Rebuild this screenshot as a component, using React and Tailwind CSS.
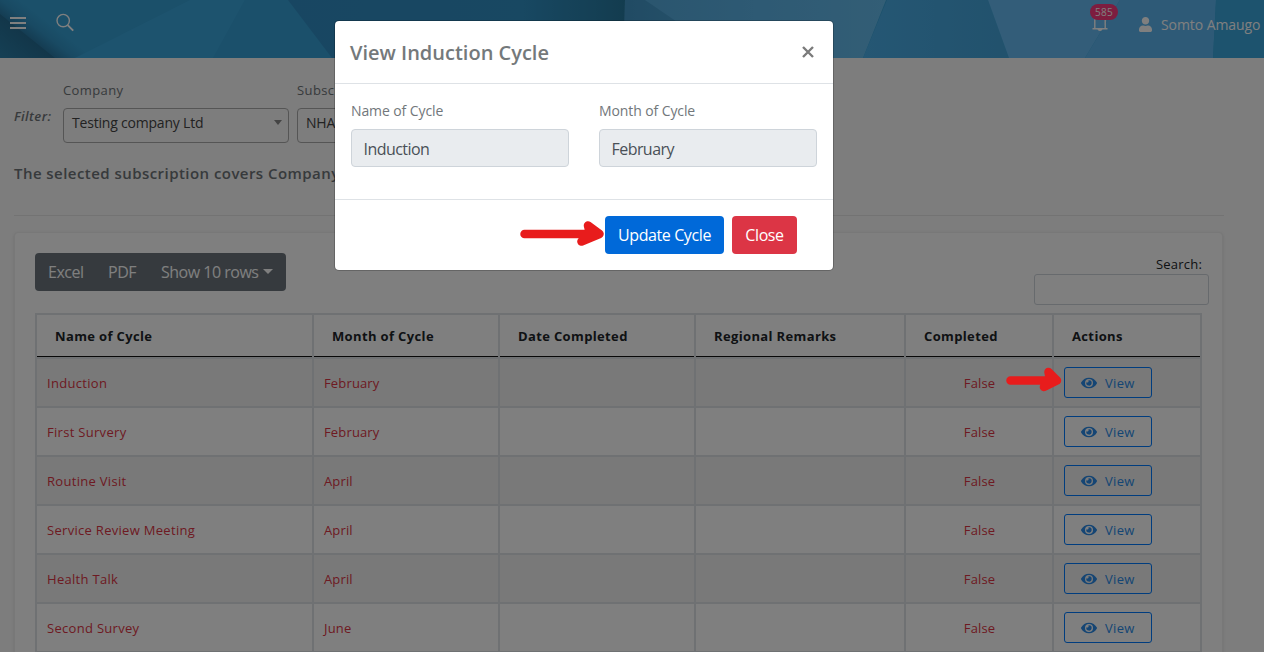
import { FaEye, FaUser } from "react-icons/fa";

const cycles = [
  ["Induction", "February"],
  ["First Survery", "February"],
  ["Routine Visit", "April"],
  ["Service Review Meeting", "April"],
  ["Health Talk", "April"],
  ["Second Survey", "June"],
];

const columns = ["Name of Cycle", "Month of Cycle", "Date Completed", "Regional Remarks", "Completed", "Actions"];

function HeaderArt() {
  return (
    <svg className="absolute inset-0 h-[58px] w-[1264px]" viewBox="0 0 1264 58" preserveAspectRatio="none">
      <defs>
        <linearGradient id="fold" gradientUnits="userSpaceOnUse" x1="6" y1="62" x2="31" y2="31">
          <stop offset="0" stopColor="#2b80aa" /><stop offset="1" stopColor="#24698f" />
        </linearGradient>
        <linearGradient id="shade" gradientUnits="userSpaceOnUse" x1="28" y1="36" x2="42" y2="18">
          <stop offset="0" stopColor="#2a7aa6" /><stop offset="0.5" stopColor="#3294c6" /><stop offset="1" stopColor="#36a0d4" />
        </linearGradient>
        <linearGradient id="mid" x1="0" x2="1"><stop offset="0" stopColor="#308dc4" /><stop offset="0.7" stopColor="#3090c4" /><stop offset="1" stopColor="#27799f" /></linearGradient>
        <linearGradient id="right" x1="0" x2="1"><stop offset="0" stopColor="#54aadc" /><stop offset="0.5" stopColor="#5cb4e8" /><stop offset="1" stopColor="#66bcec" /></linearGradient>
        <linearGradient id="wedge" x1="0" x2="1"><stop offset="0" stopColor="#4296c8" /><stop offset="1" stopColor="#50a8d8" /></linearGradient>
        <linearGradient id="deep" x1="0" x2="1"><stop offset="0" stopColor="#4aaee8" /><stop offset="1" stopColor="#44a4da" /></linearGradient>
      </defs>
      <rect width="1264" height="58" fill="#36a2d8" />
      <path d="M0 0H215L75 58H0Z" fill="url(#shade)" />
      <path d="M0 14L55 58H0Z" fill="url(#fold)" />
      <path d="M75 58L190 0H245L214 58Z" fill="#3ba6dc" />
      <path d="M245 0H290L333 58H213Z" fill="#36a0d6" />
      <path d="M288 0H625V58H332Z" fill="url(#mid)" />
      <path d="M625 0H886L863 58H624Z" fill="url(#right)" />
      <path d="M625 0H645L730 58H624Z" fill="url(#wedge)" />
      <path d="M887 0H988L1009 58H863Z" fill="url(#deep)" />
      <path d="M988 0H1120L1085 58H1009Z" fill="#66bbf2" />
      <path d="M1120 0H1216L1213 58H1085Z" fill="#5cb5ee" />
      <path d="M1216 0H1264V58H1213Z" fill="#3aa6dc" />
    </svg>
  );
}

function TopBar() {
  return (
    <header className="relative h-[58px]">
      <HeaderArt />
      <div className="relative flex h-[58px] justify-between text-white">
        <div className="flex pl-[10px]">
          <svg className="mt-[16px] h-[14px] w-4" viewBox="0 0 16 14"><path d="M0 2H16M0 7H16M0 12H16" stroke="currentColor" strokeWidth="2" /></svg>
          <svg className="mt-[13px] ml-[30px] h-[19px] w-[19px]" viewBox="0 0 19 19" fill="none" stroke="currentColor"><circle cx="7.2" cy="7.6" r="6.2" strokeWidth="1.4" /><path d="M11.7 12.1L17.2 17.6" strokeWidth="2" /></svg>
        </div>
        <div className="flex pr-1">
          <div className="relative w-[28px]">
            <svg className="absolute top-[14px] left-[2px] h-[18px] w-4" viewBox="0 0 16 18" fill="none" stroke="currentColor" strokeWidth="1.4"><path d="M0.5 14.8H15.5M2.8 14.5V6a5.2 5.2 0 0 1 10.4 0V14.5M6 15q2 2.6 4 0" /></svg>
            <span className="absolute top-1 left-0 h-4 w-[28px] rounded-full bg-[#fb3a7e] text-center text-[10px] leading-[17px] tracking-[0.2px] text-white">585</span>
          </div>
          <FaUser className="mt-[17px] ml-[21px] h-[15px] w-[13px]" preserveAspectRatio="none" />
          <span className="mt-[15px] ml-[9px] w-[99px] text-[14px] leading-5 tracking-[-0.08px] whitespace-nowrap">Somto Amaugo</span>
        </div>
      </div>
    </header>
  );
}

function Select({ label, value, width }) {
  return (
    <div className={width}>
      <div className="h-5 text-[13px] leading-5 tracking-[0.4px] text-[#6f7479]">{label}</div>
      <div className="mt-[8px] flex h-[35px] items-start justify-between rounded border border-[#aaa] bg-white/30 pt-[4px] pr-[6px] pl-2 text-[#444]">
        <span className="text-[14px] leading-5 tracking-[-0.2px] whitespace-nowrap">{value}</span>
        <svg className="mt-[7px] h-[5px] w-[8px]" viewBox="0 0 8 5"><path d="M0 0H8L4 5Z" fill="#888" /></svg>
      </div>
    </div>
  );
}

function CycleTable() {
  const grid = "grid grid-cols-[277px_186px_196px_210px_148px_148px]";
  return (
    <div className="w-[1167px] border-t-2 border-l-2 border-[#dee2e6]">
      <div className={grid}>
        {columns.map((c) => (
          <div key={c} className="h-[44px] border-r-2 border-b-2 border-[#dee2e6]">
            <div className="h-[42px] border-b border-[#111] pl-[18px] text-[13px] leading-[42px] font-bold tracking-[0.36px] whitespace-nowrap text-[#212529]">{c}</div>
          </div>
        ))}
      </div>
      {cycles.map(([name, month], i) => (
        <div key={name} className={`${grid} h-[49px] ${i % 2 ? "" : "bg-[#f2f2f2]"} text-[13px] leading-[49px] tracking-[0.3px] text-[#dc3545] *:h-[49px] *:border-r-2 *:border-b-2 *:border-[#dee2e6]`}>
          <div className="pl-[10px]">{name}</div>
          <div className="pl-[10px] tracking-[0.15px]">{month}</div>
          <div />
          <div />
          <div className="pl-[1px] text-center tracking-[0.15px]">False</div>
          <div className="pt-[8px] pl-[10px]">
            <button className="flex h-[31px] w-[88px] items-center rounded-[3px] border border-[#007bff] pl-4 leading-5 text-[#2a8be8]">
              <FaEye className="h-4 w-4" />
              <span className="ml-2">View</span>
            </button>
          </div>
        </div>
      ))}
    </div>
  );
}

function Arrow({ className, width, d }) {
  return (
    <svg className={className} viewBox={`0 0 ${width} 26`} fill="#e81c1c" stroke="#e81c1c" strokeLinecap="round" strokeLinejoin="round">
      <path d={d} strokeWidth="8.5" />
    </svg>
  );
}

function Field({ label, value }) {
  return (
    <div className="w-[218px]">
      <div className="text-[14px] leading-5 tracking-[-0.1px] text-[#72777b]">{label}</div>
      <div className="mt-[8px] h-[38px] rounded border border-[#ced4da] bg-[#e9ecef] pl-[11.5px] text-[16px] leading-[39px] tracking-[-0.55px] text-[#495057]">{value}</div>
    </div>
  );
}

function Modal() {
  return (
    <section className="absolute top-[20px] left-[334px] h-[251px] w-[500px] rounded-[5px] border border-black/20 bg-white bg-clip-padding">
      <div className="flex h-[63px] justify-between border-b border-[#dee2e6] pr-[19px] pl-[15px]">
        <h5 className="mt-[17px] text-[20px] leading-[30px] font-semibold text-[#74797b]">View Induction Cycle</h5>
        <svg className="mt-[25px] h-[12px] w-[12px]" viewBox="0 0 12 12"><path d="M1 1L11 11M11 1L1 11" stroke="#7b7b7b" strokeWidth="2.4" /></svg>
      </div>
      <div className="flex h-[116px] gap-[30px] border-b border-[#dee2e6] px-4 pt-[17px]">
        <Field label="Name of Cycle" value="Induction" />
        <Field label="Month of Cycle" value="February" />
      </div>
      <div className="flex justify-end gap-2 pt-4 pr-9 text-[16px] leading-[39px] text-white">
        <button className="h-[38px] w-[119px] rounded bg-[#0069d9] tracking-[-0.4px]">Update Cycle</button>
        <button className="h-[38px] w-[65px] rounded bg-[#dc3545] tracking-[-0.4px]">Close</button>
      </div>
    </section>
  );
}

export default function App() {
  return (
    <div className="relative h-[652px] w-[1264px] overflow-hidden bg-[#fafafa] font-['Open_Sans','Noto_Sans',sans-serif]">
      <TopBar />
      <main className="pl-[14px]">
        <div className="flex pt-[22px]">
          <div className="w-[49px] pt-[26px] text-[13px] leading-5 font-semibold tracking-[0.45px] text-[#6f7479] italic">Filter:</div>
          <Select label="Company" value="Testing company Ltd" width="w-[226px]" />
          <div className="w-2" />
          <Select label="Subscription" value="NHA" width="w-[226px]" />
        </div>
        <h6 className="mt-[19px] h-[25px] text-[15px] leading-[22px] font-semibold tracking-[0.45px] text-[#6f7479]">The selected subscription covers Company</h6>
        <div className="mt-[28px] w-[1210px] border-t border-[#e6e6e6]" />
        <div className="mt-[16px] h-[440px] w-[1209px] rounded border border-[#f0f0f0] bg-white px-[20px] pt-[20px] shadow-sm">
          <div className="flex justify-between">
            <div className="flex h-[38px] w-[251px] rounded bg-[#6c757d] pl-[13px] text-[16px] leading-[39px] tracking-[-0.5px] whitespace-nowrap text-white">
              <span className="w-[60px]">Excel</span>
              <span className="w-[53px]">PDF</span>
              <span className="w-[102px]">Show 10 rows</span>
              <svg className="mt-[16px] h-[5px] w-[10px]" viewBox="0 0 10 5"><path d="M0 0H10L5 5Z" fill="currentColor" /></svg>
            </div>
            <div className="-mr-[7px] h-[60px] w-[175px] pt-[1px]">
              <div className="pr-[7px] text-right text-[13px] leading-5 tracking-[0.2px] text-[#212529]">Search:</div>
              <div className="h-[31px] rounded-[3px] border border-[#ced4da]" />
            </div>
          </div>
          <CycleTable />
        </div>
      </main>
      <div className="absolute inset-0 bg-black/50" />
      <Modal />
      <Arrow className="absolute top-[221px] left-[519px] h-[26px] w-[87px]" width={87} d="M5.5 13H80M69 4.5L80.5 13L62.5 20.5L71 13Z" />
      <Arrow className="absolute top-[367px] left-[1005px] h-[26px] w-[57px]" width={57} d="M5.5 13.5H50M43.5 5L52 13.5L39 20L45 13Z" />
    </div>
  );
}
